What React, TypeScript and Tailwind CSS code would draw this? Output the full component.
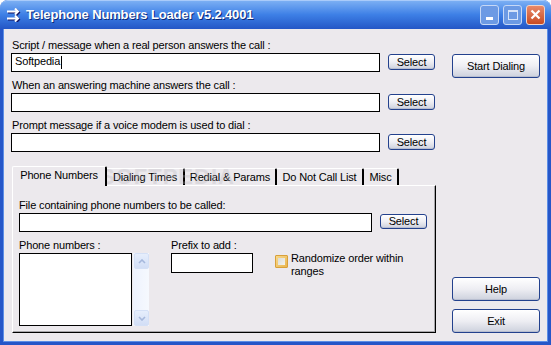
import React from 'react'

function XpButton({ label, className }: { label: string; className: string }) {
  return (
    <button
      className={
        'flex items-center justify-center rounded-[3px] border border-[#23418D] bg-gradient-to-b from-[#FFFFFF] via-[#EEEEF3] to-[#CDD1DD] text-[11px] leading-none text-black shadow-[inset_0_-1px_0_#B8BED0] ' +
        className
      }
    >
      {label}
    </button>
  )
}

function TextBox({ value, className }: { value?: string; className: string }) {
  return (
    <div className={'border border-black bg-white flex items-center pl-[3px] ' + className}>
      {value && (
        <span className="leading-none">
          {value}
          <span className="inline-block w-px h-[13px] bg-black align-middle ml-px" />
        </span>
      )}
    </div>
  )
}

function FieldRow({ label, value, top }: { label: string; value?: string; top: string }) {
  return (
    <div className={top}>
      <div className="h-[16px] leading-[16px] pl-px">{label}</div>
      <div className="flex items-start">
        <TextBox value={value} className="w-[369px] h-[19px]" />
        <XpButton label="Select" className="ml-[8px] mt-px w-[47px] h-[16px]" />
      </div>
    </div>
  )
}

const tabs = [
  { label: 'Phone Numbers', w: 'w-[95px]' },
  { label: 'Dialing Times', w: 'w-[78px]' },
  { label: 'Redial & Params', w: 'w-[92px]' },
  { label: 'Do Not Call List', w: 'w-[87px]' },
  { label: 'Misc', w: 'w-[35px]' },
]

function TitleBar() {
  return (
    <div className="h-[29px] flex items-center bg-gradient-to-b from-[#7FB2F4] via-[#3E80E6] to-[#2456C6] rounded-t-[7px] shadow-[inset_0_1px_0_#A9CBFA]">
      <svg width="16" height="14" viewBox="0 0 16 14" className="ml-[6px] mt-[1px]">
        <g stroke="#101060" strokeWidth="2" fill="none" transform="translate(1,1)">
          <path d="M1 3.5h11M9 0.5l3 3-3 3M1 10.5h11M9 7.5l3 3-3 3" />
        </g>
        <g stroke="#FFFFFF" strokeWidth="2" fill="none">
          <path d="M1 3.5h11M9 0.5l3 3-3 3M1 10.5h11M9 7.5l3 3-3 3" />
        </g>
      </svg>
      <span className="ml-[4px] text-white font-bold text-[13px] font-['Trebuchet_MS','Liberation_Sans',sans-serif] [text-shadow:1px_1px_0_#0B2A78]">
        Telephone Numbers Loader v5.2.4001
      </span>
      <div className="ml-auto mr-[6px] flex gap-[4px]">
        <div className="w-[19px] h-[20px] rounded-[3px] border border-[#C6D8F6] bg-[#6C9AE4] flex items-end justify-center pb-[4px]">
          <div className="w-[7px] h-[3px] bg-white" />
        </div>
        <div className="w-[19px] h-[20px] rounded-[3px] border border-[#C6D8F6] bg-[#6C9AE4] flex items-center justify-center">
          <div className="w-[10px] h-[10px] border border-[#D6E4FA] border-t-[2px]" />
        </div>
        <div className="w-[19px] h-[20px] rounded-[3px] border border-[#F3D4C6] bg-gradient-to-b from-[#E8896A] to-[#C84B20] flex items-center justify-center">
          <svg width="11" height="11" viewBox="0 0 11 11">
            <path d="M1.5 1.5l8 8M9.5 1.5l-8 8" stroke="white" strokeWidth="2.2" />
          </svg>
        </div>
      </div>
    </div>
  )
}

export default function App() {
  return (
    <div className="w-[551px] h-[345px] flex flex-col bg-[#2A5DCC] rounded-t-[8px] overflow-hidden font-['Tahoma','Liberation_Sans',sans-serif] text-[11px] tracking-[-0.15px] text-black">
      <TitleBar />
      <div className="flex-1 flex px-[3px] pb-[3px] bg-[#2556C8]">
        <div className="flex-1 flex border-l border-r border-b border-[#5C8EE6] bg-[#ECE9ED]">
          {/* left column */}
          <div className="w-[432px] pl-[7px] pt-[8px]">
            <FieldRow label="Script / message when a real person answers the call :" value="Softpedia" top="" />
            <FieldRow label="When an answering machine answers the call :" top="mt-[5px]" />
            <FieldRow label="Prompt message if a voice modem is used to dial :" top="mt-[5px]" />

            {/* tabs */}
            <div className="relative mt-[14px] ml-px">
              <div className="flex items-end h-[19px]">
                {tabs.map((t, i) =>
                  i === 0 ? (
                    <div
                      key={t.label}
                      className={t.w + ' h-[20px] -mb-px z-10 bg-[#ECE9ED] border-l border-t border-white border-r-2 border-r-black rounded-t-[2px] flex items-center justify-center pb-[2px]'}
                    >
                      {t.label}
                    </div>
                  ) : (
                    <div
                      key={t.label}
                      className={t.w + ' h-[17px] border-t border-white border-r-2 border-r-black rounded-tr-[2px] flex items-center justify-center'}
                    >
                      {t.label}
                    </div>
                  )
                )}
              </div>
              <div className="w-[424px] h-[148px] border-t border-l border-white border-r border-b border-r-black border-b-black shadow-[inset_-1px_-1px_0_#A7A6AA] pl-[6px] pt-[11px]">
                <div className="h-[16px] leading-[16px]">File containing phone numbers to be called:</div>
                <div className="flex items-start">
                  <TextBox className="w-[353px] h-[19px]" />
                  <XpButton label="Select" className="ml-[8px] mt-px w-[47px] h-[15px]" />
                </div>
                <div className="flex mt-[5px]">
                  <div className="w-[152px]">
                    <div className="h-[16px] leading-[16px]">Phone numbers :</div>
                    <div className="flex">
                      <div className="w-[113px] h-[73px] border border-black bg-white" />
                      <div className="w-[16px] h-[73px] ml-px flex flex-col bg-gradient-to-r from-[#EEF3FE] to-[#F6F9FE] border-l border-[#F0F4FC]">
                        <div className="h-[16px] rounded-[2px] bg-gradient-to-b from-[#E6EEFC] to-[#D2DEF6] border border-[#D4E0F6] flex items-center justify-center">
                          <svg width="8" height="5" viewBox="0 0 8 5"><path d="M1 4l3-3 3 3" stroke="#A6B8DC" strokeWidth="1.6" fill="none" /></svg>
                        </div>
                        <div className="flex-1" />
                        <div className="h-[16px] rounded-[2px] bg-gradient-to-b from-[#E6EEFC] to-[#D2DEF6] border border-[#D4E0F6] flex items-center justify-center">
                          <svg width="8" height="5" viewBox="0 0 8 5"><path d="M1 1l3 3 3-3" stroke="#A6B8DC" strokeWidth="1.6" fill="none" /></svg>
                        </div>
                      </div>
                    </div>
                  </div>
                  <div className="w-[104px]">
                    <div className="h-[16px] leading-[16px]">Prefix to add :</div>
                    <div className="w-[82px] h-[20px] border border-black bg-white" />
                  </div>
                  <div className="flex items-start mt-[18px]">
                    <div className="w-[13px] h-[13px] border border-[#D8A03A] rounded-[1px] bg-gradient-to-br from-[#F8D88A] to-[#E9B54C] p-[2px]">
                      <div className="w-full h-full bg-gradient-to-br from-[#DCDCD6] to-[#F2F2EE]" />
                    </div>
                    <div className="ml-[3px] leading-[13px] -mt-[3px] w-[120px]">Randomize order within ranges</div>
                  </div>
                </div>
              </div>
              <div className="absolute left-[88px] top-[-6px] text-[22px] font-bold tracking-[1px] text-[#B8B6BC] opacity-30 pointer-events-none font-['Liberation_Sans',sans-serif]">
                SOFTPEDIA
              </div>
            </div>
          </div>

          {/* right column */}
          <div className="flex-1 flex flex-col pl-[16px] pt-[25px] pb-[8px]">
            <XpButton label="Start Dialing" className="w-[88px] h-[24px]" />
            <div className="flex-1" />
            <XpButton label="Help" className="w-[88px] h-[24px]" />
            <XpButton label="Exit" className="w-[88px] h-[24px] mt-[8px]" />
          </div>
        </div>
      </div>
    </div>
  )
}
